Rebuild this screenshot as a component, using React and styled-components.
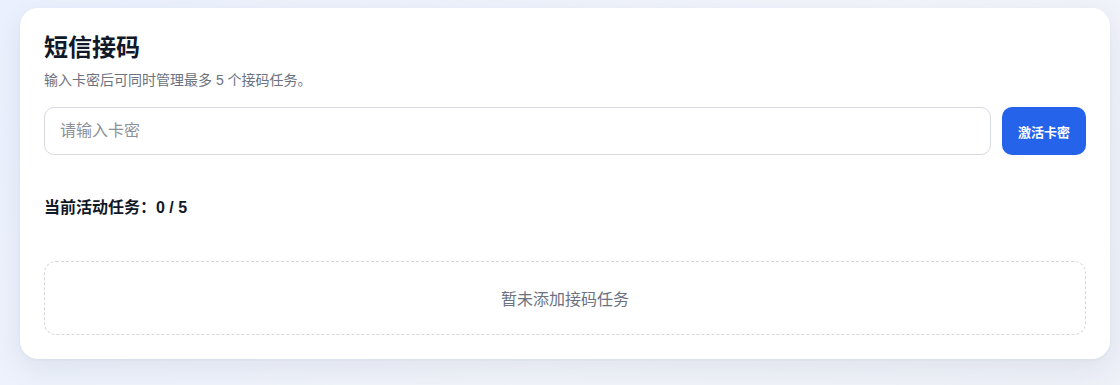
import React, { useState } from "react";
import styled, { createGlobalStyle } from "styled-components";

const GlobalStyle = createGlobalStyle`
  * { box-sizing: border-box; }
  html, body {
    margin: 0;
    padding: 0;
    background: linear-gradient(135deg, #eaf0fd 0%, #f1f4fa 60%, #eef1f8 100%);
    font-family: "Liberation Sans", "Noto Sans CJK SC", sans-serif;
    color: #111827;
  }
`;

const Page = styled.div`
  min-height: 385px;
  padding: 8px 10px 24px 20px;
`;

const Card = styled.section`
  background: #ffffff;
  border-radius: 18px;
  padding: 24px;
  box-shadow: 0 10px 30px rgba(30, 41, 80, 0.08), 0 1px 3px rgba(30, 41, 80, 0.05);
`;

const Title = styled.h1`
  margin: 0;
  font-size: 24px;
  line-height: 32px;
  font-weight: 700;
  color: #111827;
`;

const Subtitle = styled.p`
  margin: 6px 0 0;
  font-size: 14px;
  line-height: 20px;
  color: #6b7280;
`;

const InputRow = styled.div`
  display: flex;
  gap: 11px;
  margin-top: 17px;
`;

const CodeInput = styled.input`
  flex: 1;
  height: 48px;
  padding: 0 15px;
  border: 1px solid #d6d9de;
  border-radius: 10px;
  font-family: inherit;
  font-size: 16px;
  color: #111827;
  outline: none;
  &::placeholder {
    color: #8b9099;
  }
`;

const ActivateButton = styled.button`
  width: 84px;
  height: 48px;
  border: none;
  border-radius: 10px;
  background: #2563eb;
  color: #ffffff;
  font-family: inherit;
  font-size: 13px;
  font-weight: 700;
  cursor: pointer;
`;

const TaskCount = styled.div`
  margin-top: 41px;
  font-size: 16px;
  line-height: 24px;
  font-weight: 700;
  color: #111827;
`;

const EmptyBox = styled.div`
  margin-top: 41px;
  height: 74px;
  border: 1px dashed #d4d7dc;
  border-radius: 12px;
  display: flex;
  align-items: center;
  justify-content: center;
  font-size: 16px;
  color: #6b7280;
`;

export default function App() {
  const [code, setCode] = useState("");
  const tasks = [];
  return (
    <>
      <GlobalStyle />
      <Page>
        <Card>
          <Title>短信接码</Title>
          <Subtitle>输入卡密后可同时管理最多 5 个接码任务。</Subtitle>
          <InputRow>
            <CodeInput
              placeholder="请输入卡密"
              value={code}
              onChange={(e) => setCode(e.target.value)}
            />
            <ActivateButton>激活卡密</ActivateButton>
          </InputRow>
          <TaskCount>当前活动任务：{tasks.length} / 5</TaskCount>
          {tasks.length === 0 && <EmptyBox>暂未添加接码任务</EmptyBox>}
        </Card>
      </Page>
    </>
  );
}
